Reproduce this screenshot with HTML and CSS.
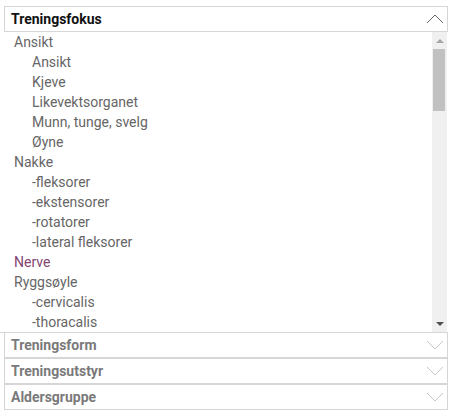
FILE: index.html
```html
<!DOCTYPE html>
<html lang="no">
<head>
    <meta charset="UTF-8">
    <title>Filter</title>
    <link rel="stylesheet" href="styles.css">
</head>
<body>
    <div class="filter">
        <div class="section open">
            <div class="section-head">
                <span class="section-title">Treningsfokus</span>
                <svg class="chev" width="18" height="12" viewBox="0 0 18 12"><polyline points="1,10 9,2 17,10" fill="none" stroke="#666" stroke-width="1"/></svg>
            </div>
            <div class="section-body">
                <ul class="options">
                    <li class="top">Ansikt</li>
                    <li class="sub">Ansikt</li>
                    <li class="sub">Kjeve</li>
                    <li class="sub">Likevektsorganet</li>
                    <li class="sub">Munn, tunge, svelg</li>
                    <li class="sub">Øyne</li>
                    <li class="top">Nakke</li>
                    <li class="sub">-fleksorer</li>
                    <li class="sub">-ekstensorer</li>
                    <li class="sub">-rotatorer</li>
                    <li class="sub">-lateral fleksorer</li>
                    <li class="top picked">Nerve</li>
                    <li class="top">Ryggsøyle</li>
                    <li class="sub">-cervicalis</li>
                    <li class="sub">-thoracalis</li>
                </ul>
                <div class="scrollbar">
                    <div class="sb-up"></div>
                    <div class="sb-track"><div class="sb-thumb"></div></div>
                    <div class="sb-down"></div>
                </div>
            </div>
        </div>
        <div class="section">
            <div class="section-head">
                <span class="section-title">Treningsform</span>
                <svg class="chev" width="18" height="12" viewBox="0 0 18 12"><polyline points="1,2 9,10 17,2" fill="none" stroke="#c8c8c8" stroke-width="1"/></svg>
            </div>
        </div>
        <div class="section">
            <div class="section-head">
                <span class="section-title">Treningsutstyr</span>
                <svg class="chev" width="18" height="12" viewBox="0 0 18 12"><polyline points="1,2 9,10 17,2" fill="none" stroke="#c8c8c8" stroke-width="1"/></svg>
            </div>
        </div>
        <div class="section">
            <div class="section-head">
                <span class="section-title">Aldersgruppe</span>
                <svg class="chev" width="18" height="12" viewBox="0 0 18 12"><polyline points="1,2 9,10 17,2" fill="none" stroke="#c8c8c8" stroke-width="1"/></svg>
            </div>
        </div>
    </div>
</body>
</html>
```
FILE: styles.css
```css
body {
    margin: 0;
    padding: 6px 0 0 4px;
    font-family: Roboto, "Liberation Sans", Arial, sans-serif;
    background-color: #FFFFFF;
}
.filter {
    width: 444px;
    display: flex;
    flex-direction: column;
}
.section-head {
    height: 24px;
    border: 1px solid #d6d6d6;
    display: flex;
    align-items: center;
    justify-content: space-between;
    padding: 0 3px 0 6px;
}
.section-title {
    font-size: 14px;
    font-weight: bold;
    color: #7a7a7a;
}
.open .section-title {
    color: #111111;
}
.chev {
    display: block;
}
.section-body {
    display: flex;
    height: 300px;
    width: 443px;
    border-bottom: 1px solid #d6d6d6;
    margin-left: -4px;
    padding-left: 4px;
}
.open + .section {
    margin-top: -1px;
}
.options {
    flex: 1;
    margin: 0;
    padding: 0;
    list-style: none;
    overflow: hidden;
}
.options li {
    height: 20px;
    line-height: 20px;
    font-size: 14px;
    color: #666666;
    white-space: nowrap;
}
.options .top {
    padding-left: 10px;
}
.options .sub {
    padding-left: 28px;
}
.options .picked {
    color: #834471;
}
.scrollbar {
    width: 15px;
    background-color: #f0f0f0;
    display: flex;
    flex-direction: column;
}
.sb-up, .sb-down {
    height: 17px;
    display: flex;
    align-items: center;
    justify-content: center;
}
.sb-up::before {
    content: "";
    border-left: 4px solid transparent;
    border-right: 4px solid transparent;
    border-bottom: 4px solid #a3a3a3;
}
.sb-down::before {
    content: "";
    border-left: 4px solid transparent;
    border-right: 4px solid transparent;
    border-top: 4px solid #505050;
}
.sb-track {
    flex: 1;
    padding: 0 2px 0 1px;
}
.sb-thumb {
    height: 62px;
    background-color: #c1c1c1;
}
```
